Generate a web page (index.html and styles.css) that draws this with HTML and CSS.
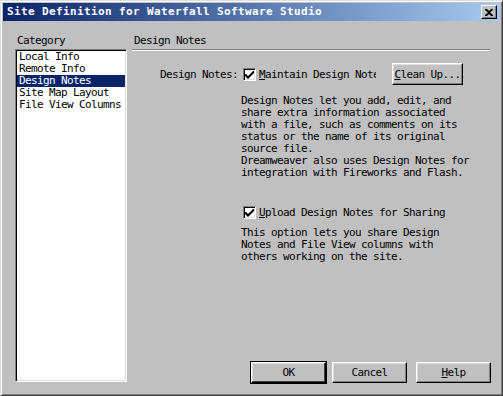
FILE: index.html
```html
<!DOCTYPE html>
<html lang="en">
<head>
  <meta charset="UTF-8" />
  <title>Site Definition for Waterfall Software Studio</title>
  <link rel="stylesheet" href="styles.css">
</head>
<body>
  <div class="window">
    <div class="titlebar">
      <span class="title">Site Definition for Waterfall Software Studio</span>
      <span class="close">
        <svg width="8" height="7" viewBox="0 0 8 7"><path d="M0 0h2l2 2 2-2h2v1L5 3.5 8 6v1H6L4 5 2 7H0V6l3-2.5L0 1z" fill="#000"/></svg>
      </span>
    </div>

    <div class="content">
      <div class="sidebar">
        <div class="caption">Category</div>
        <ul class="list">
          <li>Local Info</li>
          <li>Remote Info</li>
          <li class="selected">Design Notes</li>
          <li>Site Map Layout</li>
          <li>File View Columns</li>
        </ul>
      </div>

      <div class="main">
        <div class="caption heading">Design Notes</div>
        <div class="rule"></div>

        <div class="row">
          <span class="label">Design Notes:</span>
          <span class="check"><svg width="9" height="9" viewBox="0 0 9 9"><path d="M0 4h1l2 2 5-5h1v2L3 9 0 6z" fill="#000"/></svg></span>
          <span class="clip"><u>M</u>aintain Design Notes</span>
          <button class="btn small"><u>C</u>lean Up...</button>
        </div>

        <p class="text first">Design Notes let you add, edit, and<br>share extra information associated<br>with a file, such as comments on its<br>status or the name of its original<br>source file.<br>Dreamweaver also uses Design Notes for<br>integration with Fireworks and Flash.</p>

        <div class="row upload">
          <span class="check"><svg width="9" height="9" viewBox="0 0 9 9"><path d="M0 4h1l2 2 5-5h1v2L3 9 0 6z" fill="#000"/></svg></span>
          <span class="opt"><u>U</u>pload Design Notes for Sharing</span>
        </div>

        <p class="text second">This option lets you share Design<br>Notes and File View columns with<br>others working on the site.</p>

        <div class="buttons">
          <button class="btn default">OK</button>
          <button class="btn">Cancel</button>
          <button class="btn help"><u>H</u>elp</button>
        </div>
      </div>
    </div>
  </div>
</body>
</html>
```

FILE: styles.css
```css
body {
  margin: 0;
  background: #c0c0c0;
  font-family: "DejaVu Sans Mono", "Liberation Mono", monospace;
  font-size: 11px;
  letter-spacing: -0.62px;
  color: #000;
}
.window {
  width: 503px;
  height: 396px;
  box-sizing: border-box;
  padding: 2px;
  background: #c0c0c0;
  border: 1px solid;
  border-color: #dfdfdf #404040 #404040 #dfdfdf;
  box-shadow: inset 1px 1px #fff, inset -1px -1px #808080;
  display: flex;
  flex-direction: column;
}
.titlebar {
  height: 18px;
  background: linear-gradient(to right, #0a246a, #a6caf0);
  display: flex;
  align-items: center;
  justify-content: space-between;
  padding: 0 3px 0 4px;
}
.title {
  color: #fff;
  font-weight: bold;
  letter-spacing: 0.38px;
  line-height: 18px;
}
.close {
  width: 16px;
  height: 14px;
  box-sizing: border-box;
  background: #c0c0c0;
  border: 1px solid;
  border-color: #fff #000 #000 #fff;
  box-shadow: inset -1px -1px #808080;
  display: flex;
  align-items: center;
  justify-content: center;
}
.content {
  flex: 1;
  display: flex;
  gap: 5px;
  padding: 14px 9px 10px 12px;
}
.caption {
  line-height: 12px;
  padding-left: 2px;
}
.sidebar {
  width: 112px;
  display: flex;
  flex-direction: column;
  padding-bottom: 1px;
}
.list {
  list-style: none;
  margin: 2px 0 0;
  flex: 1;
  background: #fff;
  border: 1px solid;
  border-color: #808080 #fff #fff #808080;
  box-shadow: inset 1px 1px #000, inset -1px -1px #dfdfdf;
  padding: 1px 1px;
}
.list li {
  line-height: 12px;
  padding-left: 2px;
}
.list li.selected {
  background: #0a246a;
  color: #fff;
}
.main {
  flex: 1;
  display: flex;
  flex-direction: column;
}
.rule {
  margin-top: 2px;
  border-top: 1px solid #808080;
  border-bottom: 1px solid #fff;
  margin-right: 1px;
}
.row {
  display: flex;
  align-items: center;
  height: 22px;
  margin-top: 12px;
  padding-left: 28px;
}
.label {
  width: 83px;
}
.check {
  width: 13px;
  height: 13px;
  box-sizing: border-box;
  background: #fff;
  border: 1px solid;
  border-color: #808080 #fff #fff #808080;
  box-shadow: inset 1px 1px #000, inset -1px -1px #dfdfdf;
  display: flex;
  align-items: center;
  justify-content: center;
  flex-shrink: 0;
}
.clip {
  margin-left: 3px;
  width: 117px;
  overflow: hidden;
  white-space: nowrap;
}
.opt {
  margin-left: 3px;
  white-space: nowrap;
}
.btn {
  font: inherit;
  letter-spacing: inherit;
  color: #000;
  background: #c0c0c0;
  width: 75px;
  height: 21px;
  padding: 0;
  border: 1px solid;
  border-color: #fff #000 #000 #fff;
  box-shadow: inset -1px -1px #808080, inset 1px 1px #dfdfdf;
}
.btn.small {
  width: 71px;
  height: 22px;
  margin-left: 16px;
}
.btn.default {
  outline: 1px solid #000;
  outline-offset: 0;
  box-shadow: inset -1px -1px #404040, inset 1px 1px #dfdfdf;
}
.text {
  margin: 10px 0 0 109px;
  line-height: 12px;
  white-space: nowrap;
}
.row.upload {
  height: 16px;
  margin-top: 25px;
  padding-left: 111px;
}
.text.second {
  margin-top: 7px;
}
.buttons {
  margin-top: auto;
  display: flex;
  justify-content: flex-end;
  gap: 6px;
}
.btn.help {
  margin-left: 3px;
}
```
